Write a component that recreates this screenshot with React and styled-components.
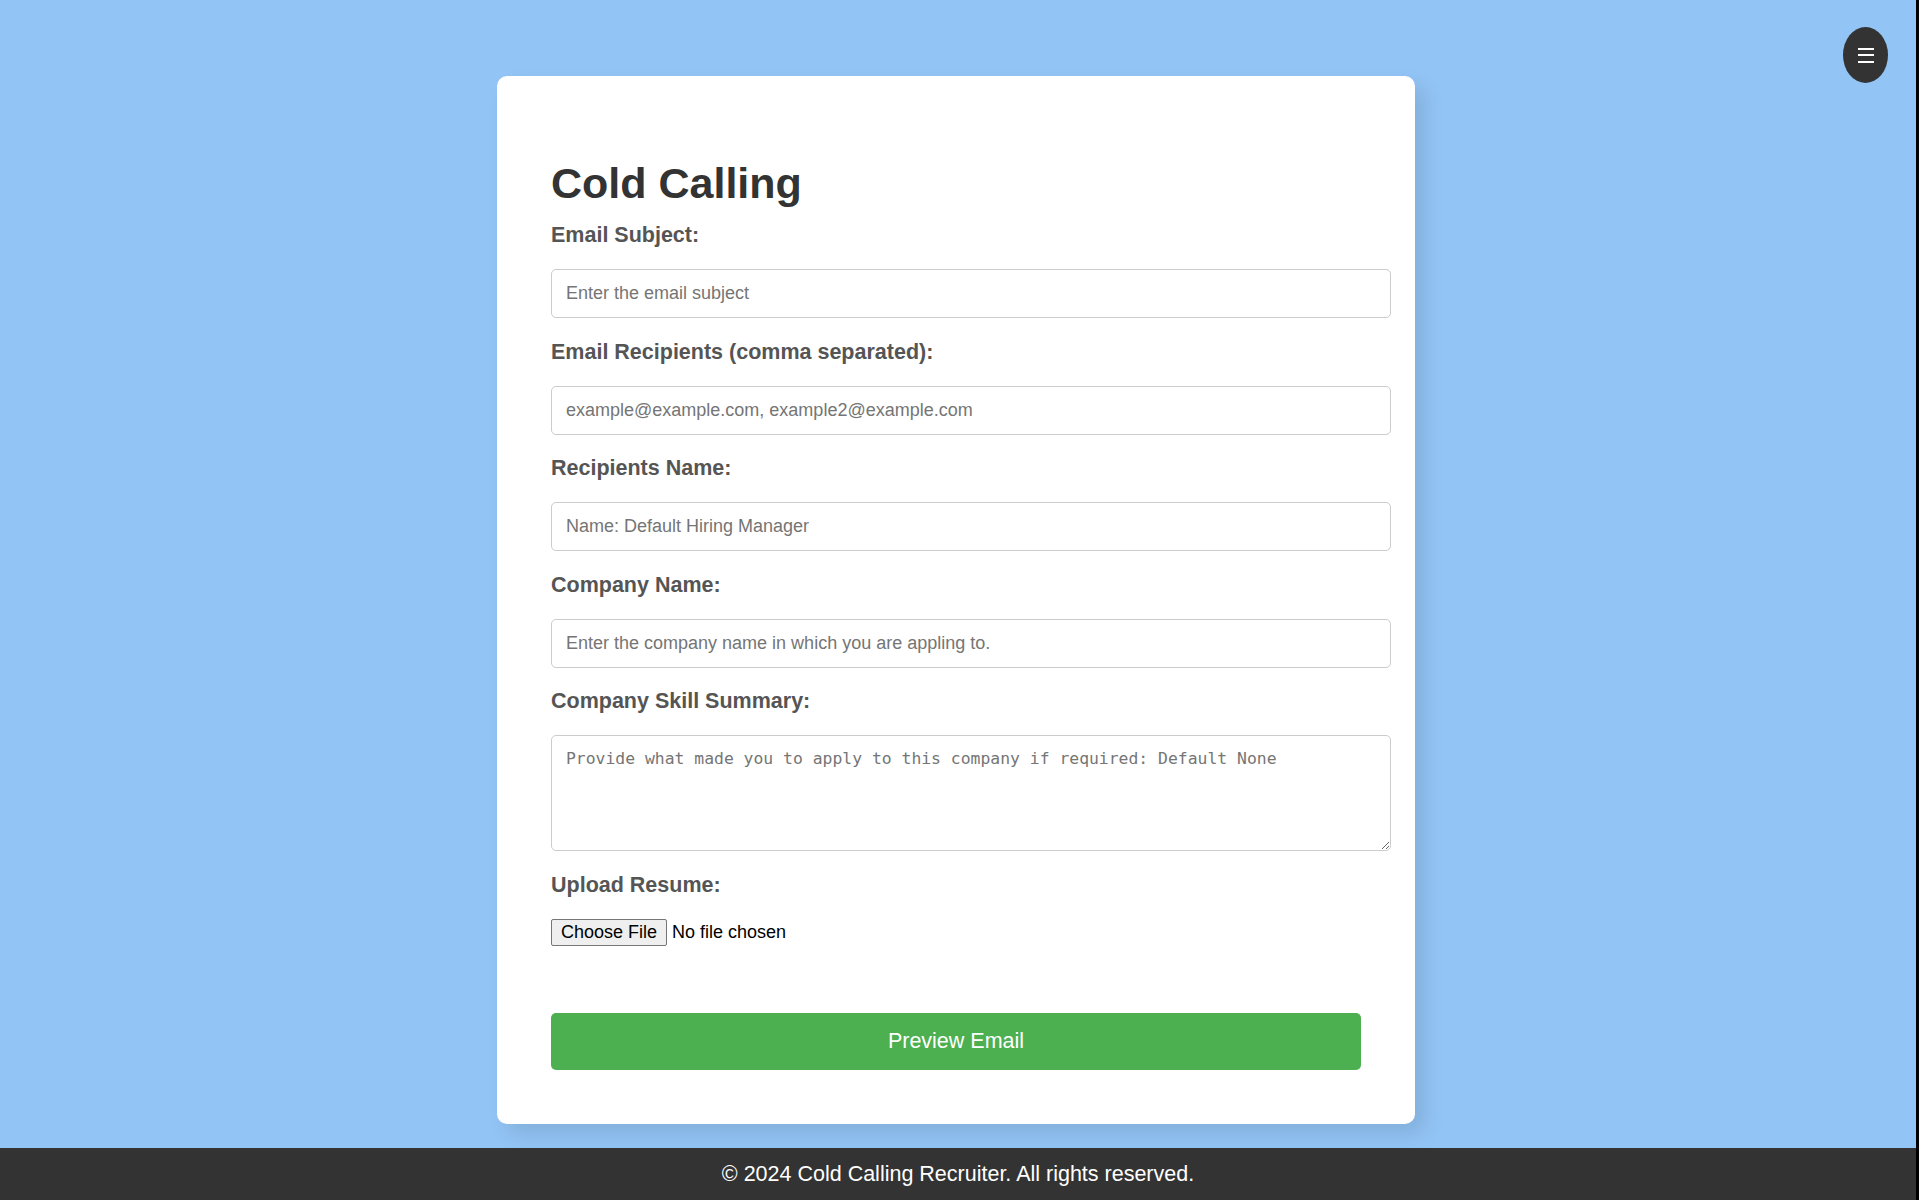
import React from "react";
import styled, { createGlobalStyle } from "styled-components";

const GlobalStyle = createGlobalStyle`
  html { background: #000; }
  body {
    margin: 0 3px 0 0;
    background: #92c4f5;
    font-family: "Liberation Sans", Arial, sans-serif;
    min-height: 100vh;
  }
  * { box-sizing: content-box; }
`;

const Page = styled.div`
  min-height: 100vh;
  display: flex;
  flex-direction: column;
  position: relative;
`;

const Main = styled.main`
  flex: 1;
  display: flex;
  justify-content: center;
  align-items: flex-start;
  padding: 76px 4px 24px 0;
`;

const Card = styled.div`
  width: 810px;
  padding: 83px 54px 54px;
  background: #fff;
  border-radius: 10px;
  box-shadow: 10px 10px 20px rgba(0, 0, 0, 0.1);
`;

const Title = styled.h1`
  margin: 0 0 15px;
  font-size: 43px;
  font-weight: 700;
  color: #333;
  line-height: normal;
`;

const Field = styled.div`
  margin-bottom: ${(p) => p.$mb || "21.5px"};
`;

const Label = styled.label`
  display: block;
  margin-bottom: 21px;
  font-size: 21.5px;
  font-weight: 700;
  color: #555;
  line-height: normal;
`;

const TextInput = styled.input`
  display: block;
  width: 100%;
  padding: 13px 14px;
  border: 1px solid #ccc;
  border-radius: 5px;
  font-family: "Liberation Sans", Arial, sans-serif;
  font-size: 18px;
  line-height: normal;
  color: #333;
  outline: none;
  &::placeholder { color: #757575; }
`;

const TextArea = styled.textarea`
  display: block;
  width: 100%;
  height: 88px;
  padding: 13px 14px;
  border: 1px solid #ccc;
  border-radius: 5px;
  font-family: "DejaVu Sans Mono", "Liberation Mono", monospace;
  font-size: 16.4px;
  line-height: normal;
  color: #333;
  outline: none;
  &::placeholder { color: #757575; }
`;

const FileInput = styled.input`
  display: block;
  font-family: "Liberation Sans", Arial, sans-serif;
  font-size: 18px;
  color: #000;
  &::file-selector-button {
    font-family: "Liberation Sans", Arial, sans-serif;
    font-size: 18px;
    color: #000;
    height: 27px;
    padding: 0 9px;
    margin-right: 5px;
    background: #efefef;
    border: 1px solid #767676;
    border-radius: 2px;
  }
`;

const SubmitButton = styled.button`
  display: block;
  width: 100%;
  box-sizing: border-box;
  height: 57px;
  margin-top: 67.5px;
  border: none;
  border-radius: 5px;
  background: #4caf50;
  color: #fff;
  font-family: "Liberation Sans", Arial, sans-serif;
  font-size: 21.5px;
  cursor: pointer;
`;

const Footer = styled.footer`
  height: 53px;
  background: #333;
  color: #fff;
  display: flex;
  align-items: center;
  justify-content: center;
  font-size: 21.5px;
`;

const MenuButton = styled.button`
  position: absolute;
  top: 27px;
  right: 28px;
  width: 45px;
  height: 56px;
  border-radius: 50%;
  border: none;
  background: #333;
  padding: 0;
  display: flex;
  flex-direction: column;
  align-items: center;
  justify-content: center;
  gap: 4.5px;
  box-sizing: border-box;
`;

const MenuLine = styled.span`
  display: block;
  width: 16px;
  height: 2px;
  background: #fff;
`;

export default function App() {
  return (
    <>
      <GlobalStyle />
      <Page>
        <MenuButton aria-label="menu">
          <MenuLine />
          <MenuLine />
          <MenuLine />
        </MenuButton>
        <Main>
          <Card>
            <Title>Cold Calling</Title>
            <Field>
              <Label>Email Subject:</Label>
              <TextInput placeholder="Enter the email subject" />
            </Field>
            <Field>
              <Label>Email Recipients (comma separated):</Label>
              <TextInput placeholder="example@example.com, example2@example.com" />
            </Field>
            <Field>
              <Label>Recipients Name:</Label>
              <TextInput placeholder="Name: Default Hiring Manager" />
            </Field>
            <Field>
              <Label>Company Name:</Label>
              <TextInput placeholder="Enter the company name in which you are appling to." />
            </Field>
            <Field>
              <Label>Company Skill Summary:</Label>
              <TextArea placeholder="Provide what made you to apply to this company if required: Default None" />
            </Field>
            <Field $mb="0">
              <Label>Upload Resume:</Label>
              <FileInput type="file" />
            </Field>
            <SubmitButton>Preview Email</SubmitButton>
          </Card>
        </Main>
        <Footer>© 2024 Cold Calling Recruiter. All rights reserved.</Footer>
      </Page>
    </>
  );
}
